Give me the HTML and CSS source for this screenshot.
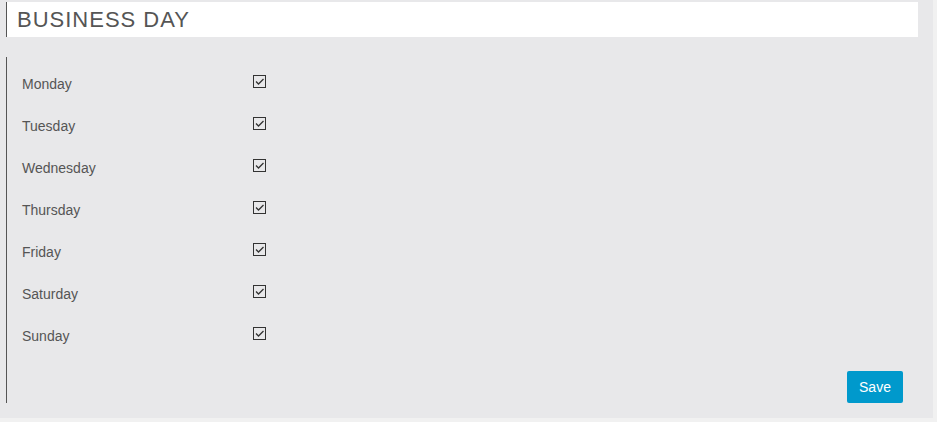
FILE: index.html
```html
<!DOCTYPE html>
<html lang="en">
<head>
    <meta charset="UTF-8">
    <title>Business Day</title>
    <link rel="stylesheet" href="styles.css">
</head>
<body>
    <div class="panel">
        <header class="title">BUSINESS DAY</header>

        <form class="days">
            <div class="row"><span class="label">Monday</span><span class="check"><svg viewBox="0 0 11 11"><path d="M2 5.5 L4.5 8 L9.5 3"/></svg></span></div>
            <div class="row"><span class="label">Tuesday</span><span class="check"><svg viewBox="0 0 11 11"><path d="M2 5.5 L4.5 8 L9.5 3"/></svg></span></div>
            <div class="row"><span class="label">Wednesday</span><span class="check"><svg viewBox="0 0 11 11"><path d="M2 5.5 L4.5 8 L9.5 3"/></svg></span></div>
            <div class="row"><span class="label">Thursday</span><span class="check"><svg viewBox="0 0 11 11"><path d="M2 5.5 L4.5 8 L9.5 3"/></svg></span></div>
            <div class="row"><span class="label">Friday</span><span class="check"><svg viewBox="0 0 11 11"><path d="M2 5.5 L4.5 8 L9.5 3"/></svg></span></div>
            <div class="row"><span class="label">Saturday</span><span class="check"><svg viewBox="0 0 11 11"><path d="M2 5.5 L4.5 8 L9.5 3"/></svg></span></div>
            <div class="row"><span class="label">Sunday</span><span class="check"><svg viewBox="0 0 11 11"><path d="M2 5.5 L4.5 8 L9.5 3"/></svg></span></div>

            <div class="actions">
                <button type="button" class="save">Save</button>
            </div>
        </form>
    </div>
</body>
</html>
```

FILE: styles.css
```css
/* General Styles */
body {
    font-family: "Liberation Sans", Arial, sans-serif;
    margin: 0;
    padding: 0;
    background: #f1f1f1;
    color: #555;
}

.panel {
    width: 933px;
    height: 418px;
    background: #e8e8ea;
    padding-top: 2px;
    box-sizing: border-box;
}

.title {
    margin-left: 6px;
    width: 912px;
    height: 35px;
    box-sizing: border-box;
    background: #fff;
    border-left: 1px solid #555;
    padding-left: 10px;
    font-size: 22px;
    line-height: 36px;
    letter-spacing: 1px;
    color: #555;
}

.days {
    margin: 20px 0 0 6px;
    width: 897px;
    border-left: 1px solid #555;
    padding: 6px 0 0 15px;
    box-sizing: border-box;
}

.row {
    display: flex;
    align-items: center;
    height: 42px;
}

.label {
    width: 231px;
    font-size: 14px;
    color: #555;
}

.check {
    display: block;
    width: 13px;
    height: 13px;
    box-sizing: border-box;
    border: 1px solid #333;
    margin-top: -5px;
}

.check svg {
    display: block;
    width: 11px;
    height: 11px;
}

.check path {
    fill: none;
    stroke: #333;
    stroke-width: 1.3;
}

.actions {
    display: flex;
    justify-content: flex-end;
    margin-top: 14px;
}

.save {
    width: 56px;
    height: 32px;
    border: none;
    border-radius: 2px;
    background: #0099cc;
    color: #fff;
    font-family: "Liberation Sans", Arial, sans-serif;
    font-size: 14px;
    padding: 0;
}
```
